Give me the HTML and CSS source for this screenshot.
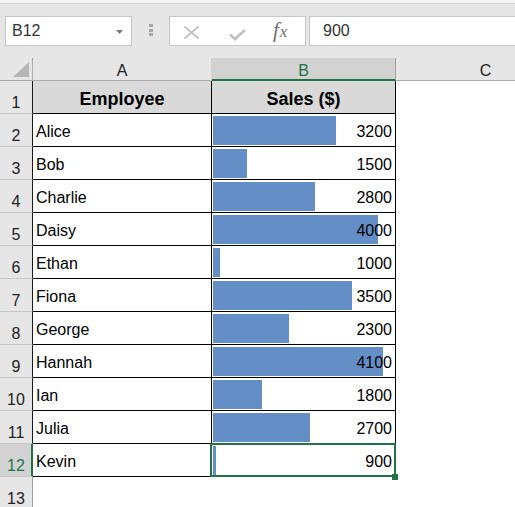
FILE: index.html
```html
<!DOCTYPE html>
<html>
<head>
<meta charset="utf-8">
<link rel="stylesheet" href="styles.css">
</head>
<body>
<div class="topstrip"></div>
<div class="toolbar">
  <div class="namebox"><span>B12</span><svg class="caret" width="7" height="4" viewBox="0 0 7 4"><polygon points="0,0 7,0 3.5,4" fill="#7a7a7a"/></svg></div>
  <div class="grip"><i></i><i></i><i></i></div>
  <div class="fxbox">
    <svg class="ico-x" width="15" height="13" viewBox="0 0 15 13"><path d="M0.5 0.5 L14.5 12.5 M14.5 0.5 L0.5 12.5" stroke="#bcbcbc" stroke-width="1.6" fill="none"/></svg>
    <svg class="ico-ok" width="17" height="12" viewBox="0 0 17 12"><polyline points="1,5.5 6,10 16,1" stroke="#c2c2c2" stroke-width="2.8" fill="none"/></svg>
    <span class="fx">f<span class="fxx">x</span></span>
  </div>
  <div class="formula">900</div>
</div>
<div class="sheet">
  <div class="corner"><svg width="16" height="15" viewBox="0 0 16 15"><polygon points="16,0 16,15 0,15" fill="#b6b6b6"/></svg></div>
  <div class="ch ca">A</div>
  <div class="ch sel">B</div>
  <div class="ch cc">C</div>

  <div class="rh t">1</div><div class="c hd">Employee</div><div class="c hd">Sales ($)</div><div class="e"></div>

  <div class="rh t">2</div><div class="c a">Alice</div><div class="c b"><span class="bar" style="width:123px"></span><span class="v">3200</span></div><div class="e"></div>
  <div class="rh t">3</div><div class="c a">Bob</div><div class="c b"><span class="bar" style="width:34px"></span><span class="v">1500</span></div><div class="e"></div>
  <div class="rh t">4</div><div class="c a">Charlie</div><div class="c b"><span class="bar" style="width:102px"></span><span class="v">2800</span></div><div class="e"></div>
  <div class="rh t">5</div><div class="c a">Daisy</div><div class="c b"><span class="bar" style="width:165px"></span><span class="v">4000</span></div><div class="e"></div>
  <div class="rh t">6</div><div class="c a">Ethan</div><div class="c b"><span class="bar" style="width:7px"></span><span class="v">1000</span></div><div class="e"></div>
  <div class="rh t">7</div><div class="c a">Fiona</div><div class="c b"><span class="bar" style="width:138.5px"></span><span class="v">3500</span></div><div class="e"></div>
  <div class="rh t">8</div><div class="c a">George</div><div class="c b"><span class="bar" style="width:75.5px"></span><span class="v">2300</span></div><div class="e"></div>
  <div class="rh t">9</div><div class="c a">Hannah</div><div class="c b"><span class="bar" style="width:170px"></span><span class="v">4100</span></div><div class="e"></div>
  <div class="rh t">10</div><div class="c a">Ian</div><div class="c b"><span class="bar" style="width:49px"></span><span class="v">1800</span></div><div class="e"></div>
  <div class="rh t">11</div><div class="c a">Julia</div><div class="c b"><span class="bar" style="width:96.5px"></span><span class="v">2700</span></div><div class="e"></div>
  <div class="rh sel">12</div><div class="c a">Kevin</div><div class="c b cur"><span class="bar" style="width:2.5px"></span><span class="v">900</span><span class="handle"></span></div><div class="e"></div>
  <div class="rh">13</div><div class="e"></div><div class="e"></div><div class="e"></div>
</div>
</body>
</html>
```
FILE: styles.css
```css
html, body {
  margin: 0;
  padding: 0;
}
body {
  width: 515px;
  height: 507px;
  overflow: hidden;
  background: #ffffff;
  font-family: "Liberation Sans", Arial, sans-serif;
  color: #000;
}
.topstrip {
  height: 3px;
  background: #f3f3f3;
  border-bottom: 1px solid #d4d4d4;
}
.toolbar {
  height: 54px;
  box-sizing: border-box;
  padding-top: 12px;
  background: #e6e6e6;
  display: flex;
  align-items: flex-start;
}
.namebox {
  margin-left: 5px;
  width: 127px;
  height: 30px;
  box-sizing: border-box;
  border: 1px solid #c6c6c6;
  background: #fff;
  display: flex;
  align-items: center;
  justify-content: space-between;
  padding: 0 8px 0 6px;
  font-size: 16px;
  line-height: 28px;
  color: #333;
}
.caret {
  display: block;
  margin-top: 1px;
}
.grip {
  margin-left: 17px;
  margin-top: 8px;
  display: flex;
  flex-direction: column;
  gap: 1.3px;
}
.grip i {
  display: block;
  width: 4px;
  height: 3.3px;
  background: #a8a8a8;
}
.fxbox {
  margin-left: 16px;
  width: 137px;
  height: 30px;
  box-sizing: border-box;
  border: 1px solid #c6c6c6;
  background: #fff;
  display: flex;
  align-items: center;
}
.ico-x {
  display: block;
  margin-left: 14px;
  margin-top: 3px;
}
.ico-ok {
  display: block;
  margin-left: 30px;
  margin-top: 7px;
}
.fx {
  margin-left: 27px;
  font-family: "Liberation Serif", "Times New Roman", serif;
  font-style: italic;
  font-size: 21px;
  color: #6e6e6e;
  line-height: 28px;
}
.fxx {
  font-size: 17px;
  margin-left: 1px;
}
.formula {
  margin-left: 3px;
  flex: 1;
  height: 30px;
  box-sizing: border-box;
  border: 1px solid #c6c6c6;
  border-right: none;
  background: #fff;
  padding-left: 13px;
  font-size: 16px;
  line-height: 28px;
  color: #333;
}
.sheet {
  display: grid;
  grid-template-columns: 33px 179px 184px 179px;
  grid-template-rows: 23px;
  grid-auto-rows: 33px;
  width: 515px;
  overflow: hidden;
}
.sheet > div {
  box-sizing: border-box;
  min-width: 0;
}
.corner {
  background: #e6e6e6;
  border-right: 1px solid #ababab;
  border-bottom: 1px solid #ababab;
  display: flex;
  justify-content: flex-end;
  align-items: flex-end;
  padding: 0 3px 3px 0;
}
.corner svg {
  display: block;
}
.ch {
  background: #e6e6e6;
  border-bottom: 1px solid #ababab;
  border-right: 1px solid #c8c8c8;
  text-align: center;
  font-size: 16px;
  line-height: 21px;
  padding-top: 2px;
  color: #222;
}
.ch.ca {
  border-right-color: #d2d2d2;
}
.ch.sel {
  background: #d2d2d2;
  color: #217346;
  border-right-color: #9f9f9f;
  border-bottom-color: #217346;
  box-shadow: inset 0 -1px 0 #217346;
}
.ch.cc {
  border-right: none;
}
.rh {
  background: #e6e6e6;
  border-right: 1px solid #9c9c9c;
  border-bottom: 1px solid #c6c6c6;
  display: flex;
  justify-content: center;
  align-items: flex-end;
  font-size: 16px;
  line-height: 20px;
  color: #222;
}
.rh.t {
  border-right-color: #1a1a1a;
}
.rh.sel {
  background: #d2d2d2;
  color: #217346;
  border-right-color: #217346;
  box-shadow: inset -1px 0 0 #217346;
}
.c {
  border-right: 1px solid #000;
  border-bottom: 1px solid #000;
  font-size: 16px;
  line-height: 20px;
}
.hd {
  background: #d9d9d9;
  font-weight: bold;
  font-size: 18px;
  line-height: 22px;
  display: flex;
  justify-content: center;
  align-items: flex-end;
  padding-bottom: 3px;
}
.a {
  display: flex;
  align-items: flex-end;
  padding: 0 3px 4.5px 3px;
}
.b {
  display: grid;
  grid-template-columns: 1fr;
  grid-template-rows: 1fr;
}
.bar {
  grid-area: 1 / 1;
  justify-self: start;
  margin: 2px 0 1px 1px;
  background: #638ec6;
}
.v {
  grid-area: 1 / 1;
  justify-self: end;
  align-self: end;
  padding: 0 3px 4.5px 0;
}
.cur {
  position: relative;
}
.cur::after {
  content: "";
  position: absolute;
  left: -2px;
  top: -1px;
  right: -1px;
  bottom: -1px;
  border: 2px solid #217346;
}
.handle {
  position: absolute;
  right: -3px;
  bottom: -4px;
  width: 6px;
  height: 6px;
  background: #217346;
  z-index: 2;
}
```
